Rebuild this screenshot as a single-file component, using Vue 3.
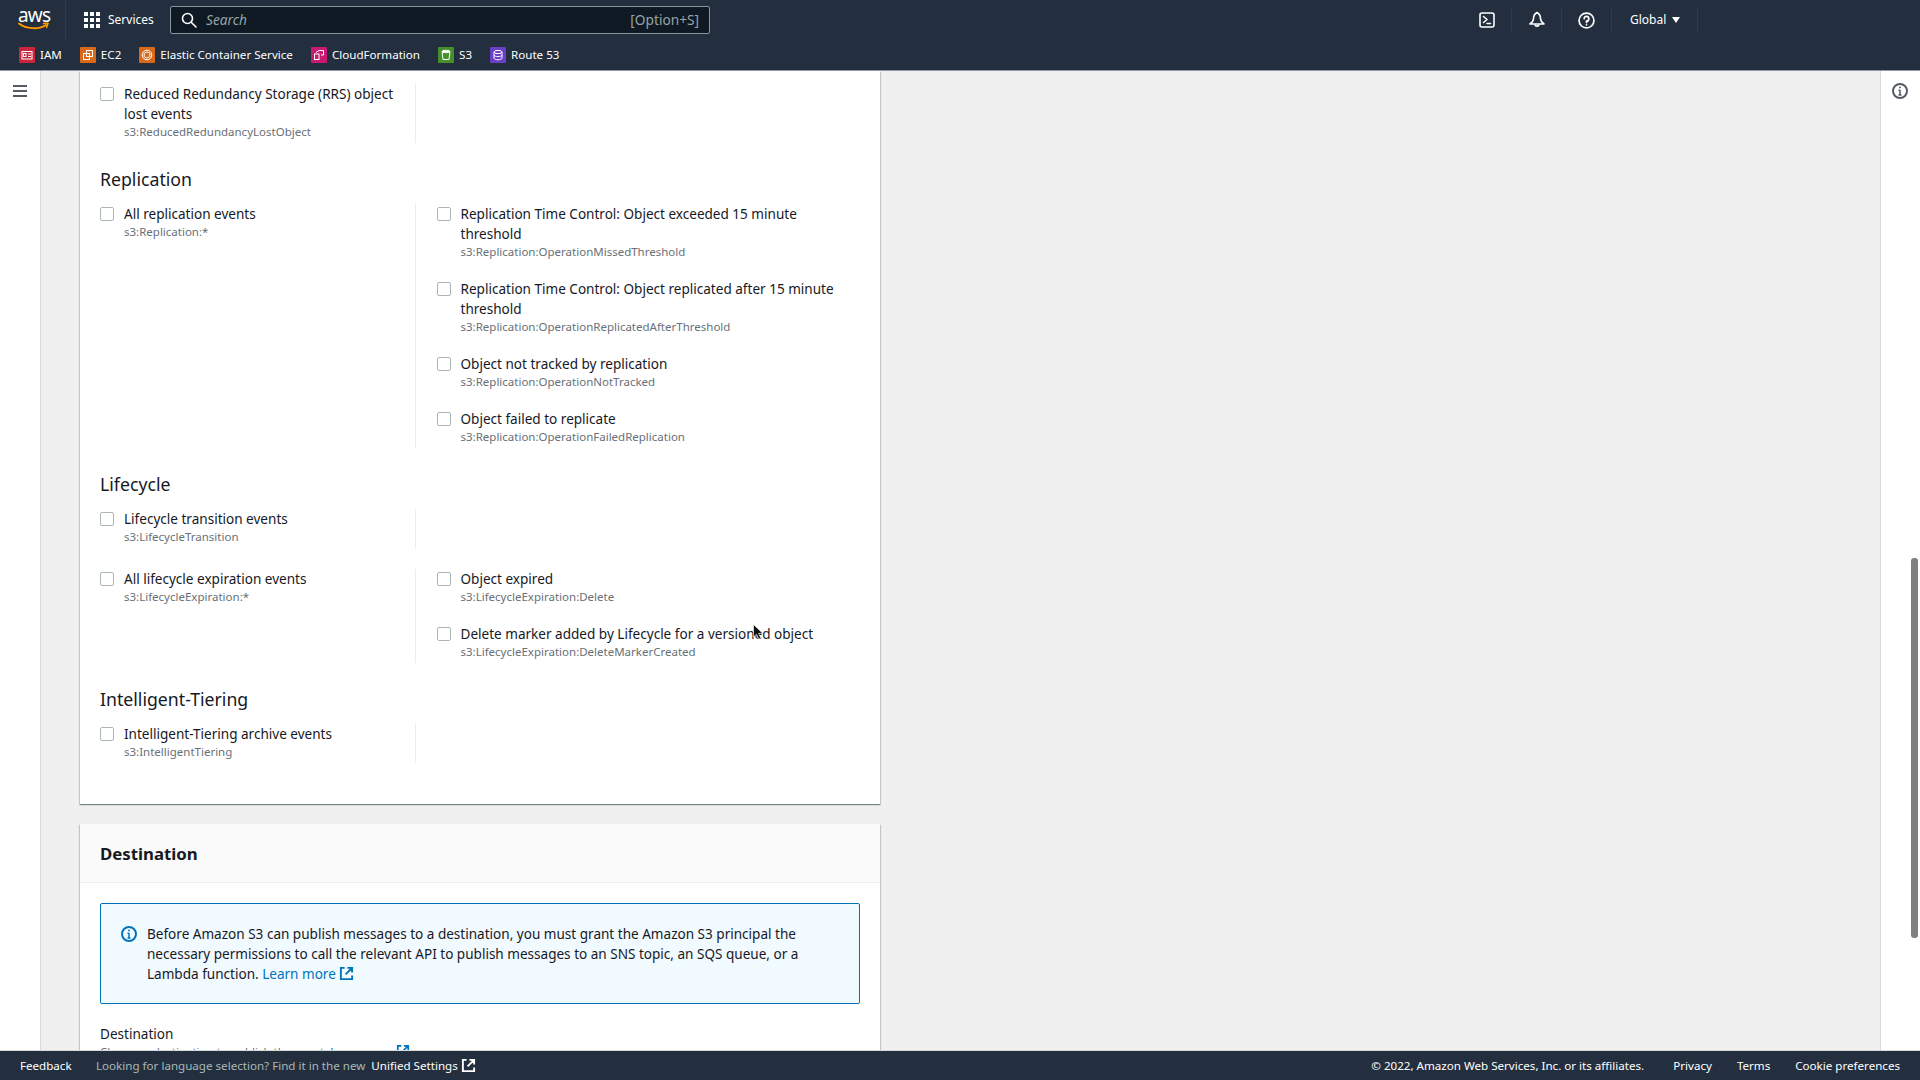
<script setup>
const shortcuts = [
  { name: 'IAM', color: '#c9253c', kind: 'iam' },
  { name: 'EC2', color: '#d9691a', kind: 'ec2' },
  { name: 'Elastic Container Service', color: '#d9691a', kind: 'ecs' },
  { name: 'CloudFormation', color: '#c91a72', kind: 'cf' },
  { name: 'S3', color: '#45902c', kind: 's3' },
  { name: 'Route 53', color: '#6a3fc4', kind: 'r53' }
]

const groups = [
  {
    rows: [
      { left: [{ label: 'Reduced Redundancy Storage (RRS) object lost events', code: 's3:ReducedRedundancyLostObject' }], right: [] }
    ]
  },
  {
    title: 'Replication',
    rows: [
      {
        left: [{ label: 'All replication events', code: 's3:Replication:*' }],
        right: [
          { label: 'Replication Time Control: Object exceeded 15 minute threshold', code: 's3:Replication:OperationMissedThreshold' },
          { label: 'Replication Time Control: Object replicated after 15 minute threshold', code: 's3:Replication:OperationReplicatedAfterThreshold' },
          { label: 'Object not tracked by replication', code: 's3:Replication:OperationNotTracked' },
          { label: 'Object failed to replicate', code: 's3:Replication:OperationFailedReplication' }
        ]
      }
    ]
  },
  {
    title: 'Lifecycle',
    rows: [
      { left: [{ label: 'Lifecycle transition events', code: 's3:LifecycleTransition' }], right: [] },
      {
        left: [{ label: 'All lifecycle expiration events', code: 's3:LifecycleExpiration:*' }],
        right: [
          { label: 'Object expired', code: 's3:LifecycleExpiration:Delete' },
          { label: 'Delete marker added by Lifecycle for a versioned object', code: 's3:LifecycleExpiration:DeleteMarkerCreated' }
        ]
      }
    ]
  },
  {
    title: 'Intelligent-Tiering',
    rows: [
      { left: [{ label: 'Intelligent-Tiering archive events', code: 's3:IntelligentTiering' }], right: [] }
    ]
  }
]
</script>

<template>
  <div class="page">
    <header class="top">
      <div class="top-main">
        <div class="logo">
          <span class="logo-text">aws</span>
          <svg class="smile" width="32" height="9" viewBox="0 0 32 9" fill="none">
            <path d="M1 1.5C8 7 21 8 28 3" stroke="#ff9900" stroke-width="1.8" stroke-linecap="round" />
            <path d="M25.5 1.6L30 1.2L28.6 5.6" stroke="#ff9900" stroke-width="1.5" stroke-linecap="round" stroke-linejoin="round" />
          </svg>
        </div>
        <div class="services">
          <svg width="16" height="16" viewBox="0 0 16 16" fill="#fff">
            <rect x="0" y="0" width="4" height="4" /><rect x="6" y="0" width="4" height="4" /><rect x="12" y="0" width="4" height="4" />
            <rect x="0" y="6" width="4" height="4" /><rect x="6" y="6" width="4" height="4" /><rect x="12" y="6" width="4" height="4" />
            <rect x="0" y="12" width="4" height="4" /><rect x="6" y="12" width="4" height="4" /><rect x="12" y="12" width="4" height="4" />
          </svg>
          <span>Services</span>
        </div>
        <div class="search">
          <svg width="16" height="16" viewBox="0 0 16 16" fill="none" stroke="#fff" stroke-width="1.6">
            <circle cx="6.5" cy="6.5" r="5" /><path d="M10.2 10.2L15 15" stroke-linecap="round" />
          </svg>
          <span class="search-ph">Search</span>
          <span class="search-key">[Option+S]</span>
        </div>
        <div class="top-right">
          <div class="tool">
            <svg width="16" height="16" viewBox="0 0 16 16" fill="none" stroke="#fff" stroke-width="1.6">
              <rect x="1" y="1" width="14" height="14" rx="2" />
              <path d="M4.5 4.5L8 7.5L4.5 10.5M8 11.5H11.5" stroke-linecap="round" stroke-linejoin="round" />
            </svg>
          </div>
          <div class="tool">
            <svg width="16" height="18" viewBox="0 0 16 18" fill="none" stroke="#fff" stroke-width="1.6" stroke-linejoin="round">
              <path d="M8 1.5C5.5 3 4.5 5 4.5 7.5C4.5 10 3 11.5 1 13H15C13 11.5 11.5 10 11.5 7.5C11.5 5 10.5 3 8 1.5Z" />
              <path d="M5.8 13.5A2.3 2.3 0 0 0 10.2 13.5" />
            </svg>
          </div>
          <div class="tool">
            <svg width="17" height="17" viewBox="0 0 16 16" fill="none" stroke="#fff" stroke-width="1.6">
              <circle cx="8" cy="8" r="7" />
              <path d="M5.8 6.2A2.2 2.2 0 1 1 8 8.6V9.8" stroke-linecap="round" />
              <circle cx="8" cy="12" r="0.5" fill="#fff" stroke-width="0.8" />
            </svg>
          </div>
          <div class="region">
            <span>Global</span>
            <svg width="8" height="6" viewBox="0 0 8 6" fill="#fff"><path d="M0 0H8L4 6Z" /></svg>
          </div>
        </div>
      </div>
      <div class="top-links">
        <div v-for="s in shortcuts" :key="s.name" class="shortcut">
          <span class="svc" :style="{ background: s.color }">
            <svg width="16" height="16" viewBox="0 0 16 16" fill="none" stroke="#fff" stroke-width="1">
              <g v-if="s.kind === 'iam'"><rect x="3" y="4.5" width="10" height="7.5" /><rect x="4.5" y="6.5" width="2.5" height="3" /><path d="M9 7H12M9 9.5H12" /></g>
              <g v-else-if="s.kind === 'ec2'"><rect x="6.5" y="3.5" width="6" height="6" /><rect x="3.5" y="6.5" width="6" height="6" /></g>
              <g v-else-if="s.kind === 'ecs'"><circle cx="8" cy="8" r="4.8" /><path d="M8 4.8L10.8 6.4V9.6L8 11.2L5.2 9.6V6.4Z" /></g>
              <g v-else-if="s.kind === 'cf'"><rect x="3.5" y="7" width="4.5" height="5.5" /><path d="M8 3.5H12.5V8H10M5 5.5L8 3.5" /></g>
              <g v-else-if="s.kind === 's3'"><path d="M4 4.5H12L11 12.5H5Z" /><ellipse cx="8" cy="4.5" rx="4" ry="1.2" /></g>
              <g v-else><ellipse cx="8" cy="5" rx="4" ry="1.6" /><path d="M4 5V11C4 12 6 12.8 8 12.8C10 12.8 12 12 12 11V5M4 8C4 9 6 9.6 8 9.6C10 9.6 12 9 12 8" /></g>
            </svg>
          </span>
          <span>{{ s.name }}</span>
        </div>
      </div>
    </header>

    <div class="body">
      <aside class="side side-left">
        <svg width="14" height="12" viewBox="0 0 14 12" stroke="#545b64" stroke-width="2" fill="none"><path d="M0 1H14M0 6H14M0 11H14" /></svg>
      </aside>

      <main class="main">
        <section class="card card-events">
          <div v-for="(g, gi) in groups" :key="gi" class="group">
            <h3 v-if="g.title" class="group-title">{{ g.title }}</h3>
            <div v-for="(r, ri) in g.rows" :key="ri" class="row">
              <div class="col col-left">
                <label v-for="it in r.left" :key="it.code" class="item">
                  <span class="box"></span>
                  <span class="item-text">
                    <span class="item-label">{{ it.label }}</span>
                    <span class="item-code">{{ it.code }}</span>
                  </span>
                </label>
              </div>
              <div class="col col-right">
                <label v-for="it in r.right" :key="it.code" class="item">
                  <span class="box"></span>
                  <span class="item-text">
                    <span class="item-label">{{ it.label }}</span>
                    <span class="item-code">{{ it.code }}</span>
                  </span>
                </label>
              </div>
            </div>
          </div>
        </section>

        <section class="card card-dest">
          <div class="card-head">Destination</div>
          <div class="card-body">
            <div class="alert">
              <svg class="alert-icon" width="16" height="16" viewBox="0 0 16 16" fill="none" stroke="#0073bb" stroke-width="2">
                <circle cx="8" cy="8" r="7" />
                <path d="M8 7V12M6.5 12H9.5M6.5 7.2H8" stroke-width="1.5" />
                <path d="M8 3.8V5.2" stroke-width="1.8" />
              </svg>
              <p class="alert-text">
                Before Amazon S3 can publish messages to a destination, you must grant the Amazon S3 principal the necessary permissions to call the relevant API to publish messages to an SNS topic, an SQS queue, or a Lambda function.
                <a class="link">Learn more
                  <svg class="ext" width="15" height="15" viewBox="0 0 16 16" fill="none" stroke="#0073bb" stroke-width="2"><path d="M6 2H2V14H14V10M9 2H14V7M14 2L7 9" /></svg>
                </a>
              </p>
            </div>
            <div class="field-label">Destination</div>
            <div class="field-desc">Choose a destination to publish the event. <a class="link">Learn more
              <svg class="ext" width="14" height="14" viewBox="0 0 16 16" fill="none" stroke="#0073bb" stroke-width="2"><path d="M6 2H2V14H14V10M9 2H14V7M14 2L7 9" /></svg>
            </a></div>
          </div>
        </section>
      </main>

      <aside class="side side-right">
        <svg width="16" height="16" viewBox="0 0 16 16" fill="none" stroke="#545b64" stroke-width="2">
          <circle cx="8" cy="8" r="7" />
          <path d="M8 7V12M6.5 12H9.5M6.5 7.2H8" stroke-width="1.5" />
          <path d="M8 3.8V5.2" stroke-width="1.8" />
        </svg>
      </aside>
    </div>

    <footer class="foot">
      <span class="foot-feedback">Feedback</span>
      <span class="foot-lang">Looking for language selection? Find it in the new <b>Unified Settings</b>
        <svg width="15" height="15" viewBox="0 0 16 16" fill="none" stroke="#fff" stroke-width="2"><path d="M6 2H2V14H14V10M9 2H14V7M14 2L7 9" /></svg>
      </span>
      <span class="foot-right">
        <span class="foot-copy">© 2022, Amazon Web Services, Inc. or its affiliates.</span>
        <span>Privacy</span>
        <span>Terms</span>
        <span>Cookie preferences</span>
      </span>
    </footer>

    <div class="scrollbar"></div>
    <svg class="cursor" width="11" height="16" viewBox="0 0 11 16"><path d="M0.5 0.5V13L3.5 10.2L5.8 15L7.8 14L5.6 9.4H9.8Z" fill="#111" stroke="#fff" stroke-width="0.6" /></svg>
  </div>
</template>

<style>
html, body { margin: 0; overflow: hidden; }
</style>

<style scoped>
.page {
  position: relative;
  width: 1920px;
  height: 1080px;
  display: flex;
  flex-direction: column;
  overflow: hidden;
  font-family: "Noto Sans", "Liberation Sans", sans-serif;
  font-size: 13.55px;
  line-height: 20px;
  color: #16191f;
  background: #f0f0f0;
}
.top { flex: none; height: 71px; background: #232f3e; color: #fff; box-sizing: border-box; border-bottom: 1px solid #8d99a8; }
.top-main { display: flex; align-items: center; height: 40px; }
.logo { position: relative; width: 66px; height: 40px; box-sizing: border-box; padding-left: 18px; border-right: 1px solid #2f3b4a; display: block; }
.logo-text { display: block; font-size: 19px; line-height: 20px; padding-top: 5px; letter-spacing: -0.8px; }
.smile { position: absolute; left: 18px; top: 22px; }
.services { display: flex; align-items: center; gap: 8px; padding-left: 18px; width: 104px; box-sizing: border-box; font-size: 12px; }
.search { display: flex; align-items: center; width: 540px; height: 28px; box-sizing: border-box; margin-left: 0; padding: 0 10px 0 10px; background: #0f1923; border: 1px solid #87959f; border-radius: 2px; }
.search-ph { margin-left: 9px; font-style: italic; color: #95a5a6; font-size: 13.7px; }
.search-key { margin-left: auto; color: #95a5a6; font-size: 13.7px; }
.top-right { display: flex; align-items: center; margin-left: 752px; }
.tool { display: flex; align-items: center; justify-content: center; width: 50px; height: 24px; border-right: 1px solid #2f3b4a; box-sizing: border-box; }
.region { display: flex; align-items: center; gap: 6px; width: 86px; height: 24px; box-sizing: border-box; padding-left: 18px; border-right: 1px solid #2f3b4a; font-size: 12px; }
.top-links { display: flex; align-items: center; gap: 18px; height: 30px; padding-left: 19px; font-size: 11.6px; }
.shortcut { display: flex; align-items: center; gap: 5px; }
.svc { display: flex; width: 16px; height: 16px; border-radius: 1px; }

.body { flex: 1; display: flex; min-height: 0; }
.side { flex: none; width: 40px; background: #fff; display: flex; justify-content: center; box-sizing: border-box; }
.side-left { width: 41px; border-right: 1px solid #d5dbdb; padding-top: 14px; padding-right: 1px; }
.side-right { border-left: 1px solid #d5dbdb; padding-top: 12px; padding-right: 2px; }
.main { flex: 1; min-width: 0; overflow: hidden; padding-left: 39px; }

.card { width: 800px; background: #fff; box-shadow: 0 1px 1px 0 rgba(0, 28, 36, .3), 1px 1px 1px 0 rgba(0, 28, 36, .15), -1px 1px 1px 0 rgba(0, 28, 36, .15); }
.card-events { box-sizing: border-box; padding: 13px 20px 41px; }
.group-title { margin: 25px 0 14px; font-size: 17.7px; line-height: 22px; font-weight: 400; }
.row { display: flex; }
.row + .row { margin-top: 21px; }
.col { padding-bottom: 3px; display: flex; flex-direction: column; gap: 19px; box-sizing: border-box; }
.col-left { width: 316px; border-right: 1px solid #eaeded; padding-right: 10px; }
.col-right { flex: 1; padding-left: 20.5px; padding-right: 10px; }
.item { display: flex; gap: 10px; }
.box { flex: none; width: 14px; height: 14px; margin-top: 3px; box-sizing: border-box; border: 1px solid #aab7b8; border-radius: 2px; background: #fff; }
.item-text { display: flex; flex-direction: column; min-width: 0; }
.item-label { display: block; }
.item-code { display: block; font-size: 11.5px; line-height: 16px; color: #687078; }

.card-dest { margin-top: 20px; }
.card-head { height: 59px; box-sizing: border-box; padding: 18px 20px 0; background: #fafafa; border-bottom: 1px solid #eaeded; font-size: 16.8px; line-height: 24px; font-weight: 700; }
.card-body { padding: 20px; }
.alert { display: flex; gap: 10px; box-sizing: border-box; height: 101px; padding: 20px 20px 0 20px; background: #f1faff; border: 1px solid #0073bb; border-radius: 2px; }
.alert-icon { flex: none; margin-top: 2px; }
.alert-text { margin: 0; }
.link { color: #0073bb; }
.ext { vertical-align: -2px; }
.field-label { margin-top: 20px; }
.field-desc { font-size: 11.5px; line-height: 13px; color: #687078; }

.foot { flex: none; position: relative; z-index: 1; display: flex; align-items: center; height: 30px; padding: 0 20px; background: #232f3e; color: #fff; font-size: 11.6px; border-top: 1px solid #d5dbdb; box-sizing: border-box; }
.foot-feedback { width: 76px; }
.foot-lang { color: #aab7b8; display: flex; align-items: center; gap: 3px; white-space: pre; }
.foot-lang b { color: #fff; font-weight: 400; }
.foot-right { margin-left: auto; display: flex; gap: 25px; }
.foot-copy { margin-right: 4px; }

.scrollbar { position: absolute; left: 1911px; top: 558px; width: 7px; height: 380px; border-radius: 3px; background: #7f7f7f; }
.cursor { position: absolute; left: 753px; top: 624px; }
</style>
